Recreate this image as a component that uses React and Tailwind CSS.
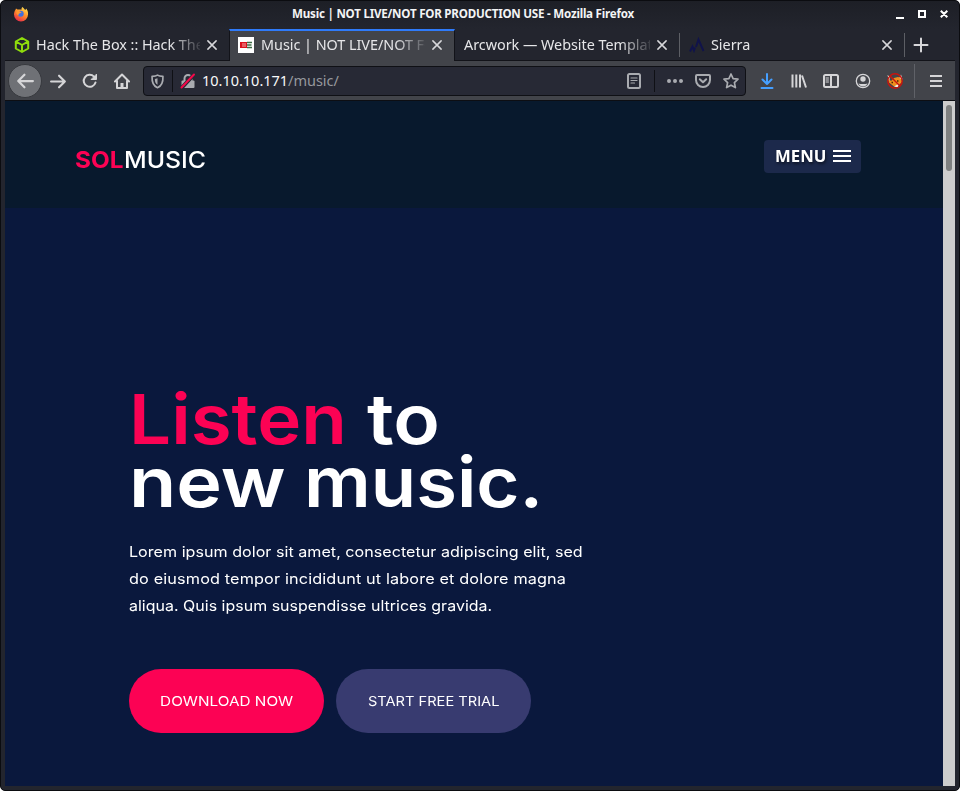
import React from "react";

function Icon({ children, className = "", size = 16 }) {
  return (
    <svg
      width={size}
      height={size}
      viewBox="0 0 16 16"
      fill="none"
      stroke="currentColor"
      strokeWidth="2"
      strokeLinecap="round"
      strokeLinejoin="round"
      className={"block shrink-0 " + className}
    >
      {children}
    </svg>
  );
}

function CloseIcon() {
  return (
    <Icon size={12} className="text-[#d7d7da]">
      <path d="M2.500 2.500l11 11M13.500 2.500l-11 11" />
    </Icon>
  );
}

function FirefoxLogo() {
  return (
    <svg width="16" height="16" viewBox="0 0 16 16" className="block shrink-0">
      <defs>
        <linearGradient id="ff" x1="0.8" y1="0.1" x2="0.3" y2="1">
          <stop offset="0" stopColor="#ffd84a" />
          <stop offset="0.45" stopColor="#ff8a2a" />
          <stop offset="1" stopColor="#e6284a" />
        </linearGradient>
      </defs>
      <path d="M9.500 1c1 1 2 2 2.600 3 .6-.2 1-.8 1-1.400 1.500 1.700 2.200 3.700 1.900 6A7 7 0 0 1 1 8.600c0-2 .6-3.600 1.400-4.600l.6-1.600 1.500 1.200c1.500-.4 3-.2 4 .2C8.300 2.800 8.700 1.700 9.500 1z" fill="url(#ff)" />
      <circle cx="7.700" cy="7.800" r="3" fill="#3f6fe0" />
      <path d="M3.500 5.200c1-.7 2.700-.5 3.700.5l1.500.3-1 1.100-1.500.4c-1 .7-.5 1.500-.5 2C4 9.300 2.800 7.200 3.500 5.200z" fill="#ff9630" />
    </svg>
  );
}

function Tab({ title, icon, active, divider, width }) {
  return (
    <div
      className={
        "flex h-[32px] shrink-0 items-center " +
        width +
        (active
          ? " border-x border-t-2 border-x-[#121319] border-t-[#2f7bfa] bg-[#42444a] pb-[2px]"
          : " border-b border-[#121319]")
      }
    >
      {icon}
      <div className="min-w-0 flex-1 overflow-hidden text-[14.4px] leading-[20px] tracking-[-0.03px] whitespace-nowrap text-[#e6e6e8] [mask-image:linear-gradient(to_right,black_calc(100%_-_30px),transparent_calc(100%_+_4px))]">
        {title}
      </div>
      <div className="mr-[11px] ml-[6px]">
        <CloseIcon />
      </div>
      {divider && <div className="h-[24px] w-px bg-[#5d5f65]" />}
    </div>
  );
}

function TitleBar() {
  return (
    <div className="flex h-[28px] shrink-0 items-center pb-[2px]">
      <div className="w-[258px] pl-[8px]">
        <FirefoxLogo />
      </div>
      <div className="w-[400px] text-center text-[11.6px] font-bold tracking-[-0.23px] whitespace-nowrap text-[#f3f4f5]">
        Music | NOT LIVE/NOT FOR PRODUCTION USE - Mozilla Firefox
      </div>
      <svg width="60" height="12" viewBox="0 0 60 12" className="ml-[229px] block" stroke="#fff" strokeWidth="2" fill="none">
        <path d="M4 10h8M27 3h6v6H27zM48.800 2.800l6.500 6.500M55.300 2.800l-6.500 6.500" />
      </svg>
    </div>
  );
}

function TabStrip() {
  return (
    <div className="flex h-[32px] shrink-0">
      <Tab
        width="w-[224px] pl-[9px]"
        title="Hack The Box :: Hack The"
        icon={
          <Icon className="mr-[6px] text-[#8fdc0c]">
            <path d="M8 1l6.200 3.500v7L8 15l-6.200-3.500v-7zM2 4.600L8 8l6-3.400M8 8v7" />
          </Icon>
        }
      />
      <Tab
        width="w-[226px] pl-[8px]"
        active
        title="Music | NOT LIVE/NOT FO"
        icon={
          <svg width="16" height="16" viewBox="0 0 16 16" className="mr-[7px] block shrink-0">
            <path fill="#fff" d="M0 0h16v16H0z" />
            <path fill="#d9101c" d="M2 5h7v6H2z" />
            <path d="M4 7h4M4 9h4" stroke="#f5aaa8" />
            <path d="M9 5.500h5M9 8h4.500M9 10.500h5" stroke="#3d6b45" strokeWidth="1.400" />
          </svg>
        }
      />
      <Tab width="w-[225px] pl-[9px]" title="Arcwork — Website Templat" divider />
      <Tab
        width="w-[225px] pl-[9px]"
        title="Sierra"
        divider
        icon={
          <svg width="16" height="16" viewBox="0 0 16 16" className="mr-[6px] block shrink-0">
            <path d="M1 14.500l2.500-5 1.500 4 1-3M7 10l2.500-7.500L14.500 14" fill="none" stroke="#10134a" strokeWidth="2" />
          </svg>
        }
      />
      <div className="flex flex-1 items-center border-b border-[#121319] pl-[8px]">
        <Icon className="text-[#d7d7da]">
          <path d="M8 1.500v13M1.500 8h13" />
        </Icon>
      </div>
    </div>
  );
}

function NavBar() {
  return (
    <div className="flex h-[40px] shrink-0 items-center border-b border-[#0d0e13] bg-[#42444a] pt-px text-[#d5d5d7]">
      <div className="ml-[3px] flex size-[34px] shrink-0 items-center justify-center rounded-full border border-[#37393e] bg-[#6f7176]">
        <Icon size={18}>
          <path d="M15 8H2M7.500 2.500L2 8l5.500 5.500" />
        </Icon>
      </div>
      <Icon size={17} className="ml-[8px]">
        <path d="M1 8h13M8.500 2.500L14 8l-5.500 5.500" />
      </Icon>
      <Icon className="ml-[15px]">
        <path d="M13.500 9.500A6 6 0 1 1 12 3.600l1.500 1.600" />
        <path d="M14.500 1.500v5h-5z" fill="currentColor" strokeWidth="1" />
      </Icon>
      <Icon className="ml-[16px]">
        <path d="M1 8.500L8 1.500l7 7M3 8v7h10V8M8 15v-4" />
        <path d="M6.500 10h3v5h-3z" fill="currentColor" stroke="none" />
      </Icon>
      <div className="ml-[13px] flex h-[30px] w-[603px] shrink-0 items-center rounded-[4px] border border-[#0f1015] bg-[#272935] text-[#a9abb0]">
        <Icon className="ml-[6px]" size={15}>
          <path d="M8 1.200C6 2.300 4.500 2.400 2.200 2.600c-.3 6 1 10 5.800 12 4.800-2 6.100-6 5.800-12C11.500 2.400 10 2.300 8 1.200z" strokeWidth="1.800" />
          <path d="M8 4.500v7C5.800 10 5.200 8.500 5.200 5.200z" fill="currentColor" stroke="none" />
        </Icon>
        <div className="ml-[7px] h-[22px] w-px bg-[#0f1015]" />
        <Icon className="ml-[7px]">
          <path d="M4.500 8V5.500a3.500 3.500 0 0 1 7 0V8" />
          <rect x="1.500" y="7.500" width="13" height="7.500" rx="1" fill="currentColor" stroke="none" />
          <path d="M2 14.500L14 1.500" stroke="#272935" strokeWidth="4" />
          <path d="M1.500 14.500L14 1.500" stroke="#f5084a" />
        </Icon>
        <div className="ml-[6px] flex-1 text-[14.5px] tracking-[-0.02px] text-[#96989d]">
          <span className="text-[#f9f9fa]">10.10.10.171</span>/music/
        </div>
        <Icon>
          <rect x="2" y="1" width="12" height="14" rx="1.500" />
          <path d="M5 5h6M5 7.500h6M5 10h3.500" strokeWidth="1.200" />
        </Icon>
        <div className="ml-[12px] h-[22px] w-px bg-[#0f1015]" />
        <Icon className="ml-[12px]" size={16}>
          <path d="M2 8h.01M8 8h.01M14 8h.01" strokeWidth="4" />
        </Icon>
        <Icon className="ml-[12px]">
          <path d="M2 2h12a1 1 0 0 1 1 1v4a7 7 0 0 1-14 0V3a1 1 0 0 1 1-1zM4.800 6.200L8 9.300l3.200-3.100" />
        </Icon>
        <Icon className="mr-[6px] ml-[12px]">
          <path d="M8 1l2.100 4.600 4.900.6-3.600 3.400 1 5L8 12.200 3.600 14.600l1-5L1 6.200l4.900-.6z" strokeWidth="1.700" />
        </Icon>
      </div>
      <Icon className="ml-[13px] text-[#459fff]">
        <path d="M8 1v9.500M3.500 6.500L8 11l4.500-4.500M2.500 15h11" />
      </Icon>
      <Icon className="ml-[16px]">
        <path d="M1.500 1.500v13M5.300 1.500v13M9 1.500v13M11 2.500l4 12" strokeLinecap="butt" />
      </Icon>
      <Icon className="ml-[16px]">
        <rect x="1" y="2" width="14" height="12" rx="1.500" />
        <path d="M8 2v12" />
        <path d="M3 5h2.500M3 7h2.500M3 9h2.500" strokeWidth="1" />
      </Icon>
      <Icon className="ml-[16px]">
        <circle cx="8" cy="8" r="6.700" strokeWidth="1.300" />
        <circle cx="8" cy="6" r="2.700" fill="currentColor" stroke="none" />
        <path d="M3.500 10.500c2 .8 7 .8 9 0-.8 1.900-2.500 3-4.500 3s-3.700-1.100-4.500-3z" fill="currentColor" stroke="none" />
      </Icon>
      <svg width="16" height="16" viewBox="0 0 16 16" className="ml-[16px] block shrink-0">
        <path d="M1 5l3 3 3-3 4-1 3 1 1 4-3 3-5 1.500-5-4z" fill="#ef8d1c" />
        <path d="M0.500 2l2.500 2-1 4zM14 1.500l1.500 5-3-1.500zM7 13.500l5-3-1 4z" fill="#f3f0e8" />
        <circle cx="8" cy="8" r="7.200" fill="none" stroke="#c9140e" strokeWidth="1.400" />
        <path d="M3 3l10 10" stroke="#c9140e" strokeWidth="1.400" />
        <path d="M4.500 9.500h1.500M10 8h1.500" stroke="#4a2505" strokeWidth="1.500" />
      </svg>
      <div className="ml-[11px] h-[34px] w-px bg-[#606268]" />
      <Icon className="ml-[13px]">
        <path d="M2 3h12M2 8h12M2 13h12" strokeLinecap="butt" />
      </Icon>
    </div>
  );
}

function Page() {
  return (
    <div className="flex min-h-0 flex-1 bg-[#0a183d] font-[Inter,sans-serif] text-white">
      <main className="w-[938px]">
        <header className="flex h-[107px] justify-between bg-[#08192d] pr-[82px] pl-[70px]">
          <div className="mt-[43px] flex h-[32px] items-center text-[23px] whitespace-nowrap">
            <span className="w-[49px] font-bold text-[#fc0254]">
              <span className="inline-block origin-left scale-x-[1.06]">SOL</span>
            </span>
            <span className="inline-block origin-left scale-x-[1.08] font-medium">MUSIC</span>
          </div>
          <button className="mt-[39px] flex h-[33px] w-[97px] items-center rounded-[4px] bg-[#1c294b] pb-px pl-[11px] font-['Noto_Sans',sans-serif] text-[16.4px] font-bold [text-shadow:1px_2px_3px_#0008]">
            <span className="w-[58px] text-left">
              <span className="inline-block origin-left scale-x-[1.02]">MENU</span>
            </span>
            <span className="flex w-[18px] flex-col gap-[3px]">
              <span className="h-[2px] bg-white" />
              <span className="h-[2px] bg-white" />
              <span className="h-[2px] bg-white" />
            </span>
          </button>
        </header>
        <section className="pt-[180px] pl-[124px]">
          <h1 className="text-[69px] leading-[63px] font-semibold whitespace-nowrap">
            <span className="flex">
              <span className="w-[238px] text-[#fc0254]">
                <span className="inline-block origin-left scale-x-[1.08]">Listen</span>
              </span>
              <span className="inline-block origin-left scale-x-[1.11]">to</span>
            </span>
            <span className="flex">
              <span className="w-[175px]">
                <span className="inline-block origin-left scale-x-[1.12]">new</span>
              </span>
              <span className="inline-block origin-left scale-x-[1.075]">music.</span>
            </span>
          </h1>
          <p className="mt-[24px] flex flex-col items-start text-[14.5px] leading-[27px] whitespace-nowrap">
            <span className="origin-left scale-x-[1.11] tracking-[0.02px]">Lorem ipsum dolor sit amet, consectetur adipiscing elit, sed</span>
            <span className="origin-left scale-x-[1.12] tracking-[0.12px]">do eiusmod tempor incididunt ut labore et dolore magna</span>
            <span className="origin-left scale-x-[1.1] tracking-[0.02px]">aliqua. Quis ipsum suspendisse ultrices gravida.</span>
          </p>
          <div className="mt-[50px] flex gap-[12px] text-[13.5px]">
            <button className="h-[64px] w-[195px] rounded-full bg-[#fc0254]">
              <span className="inline-block scale-x-[1.135]">DOWNLOAD NOW</span>
            </button>
            <button className="h-[64px] w-[195px] rounded-full bg-[#383b70]">
              <span className="inline-block scale-x-[1.083]">START FREE TRIAL</span>
            </button>
          </div>
        </section>
      </main>
      <div className="w-[12px] bg-[#cdcdcd] px-[3px] pt-[4px]">
        <div className="h-[66px] rounded-full bg-[#7e8080]" />
      </div>
    </div>
  );
}

export default function App() {
  return (
    <div className="h-[791px] w-[960px] bg-white">
      <div className="flex h-full w-full flex-col overflow-hidden rounded-[5px] border border-[#0b0c10] bg-[#23252e] bg-[linear-gradient(#1d1f26,#23252e_28px)] px-[4px] pb-[4px] font-['Noto_Sans',sans-serif]">
        <TitleBar />
        <TabStrip />
        <NavBar />
        <Page />
      </div>
    </div>
  );
}
